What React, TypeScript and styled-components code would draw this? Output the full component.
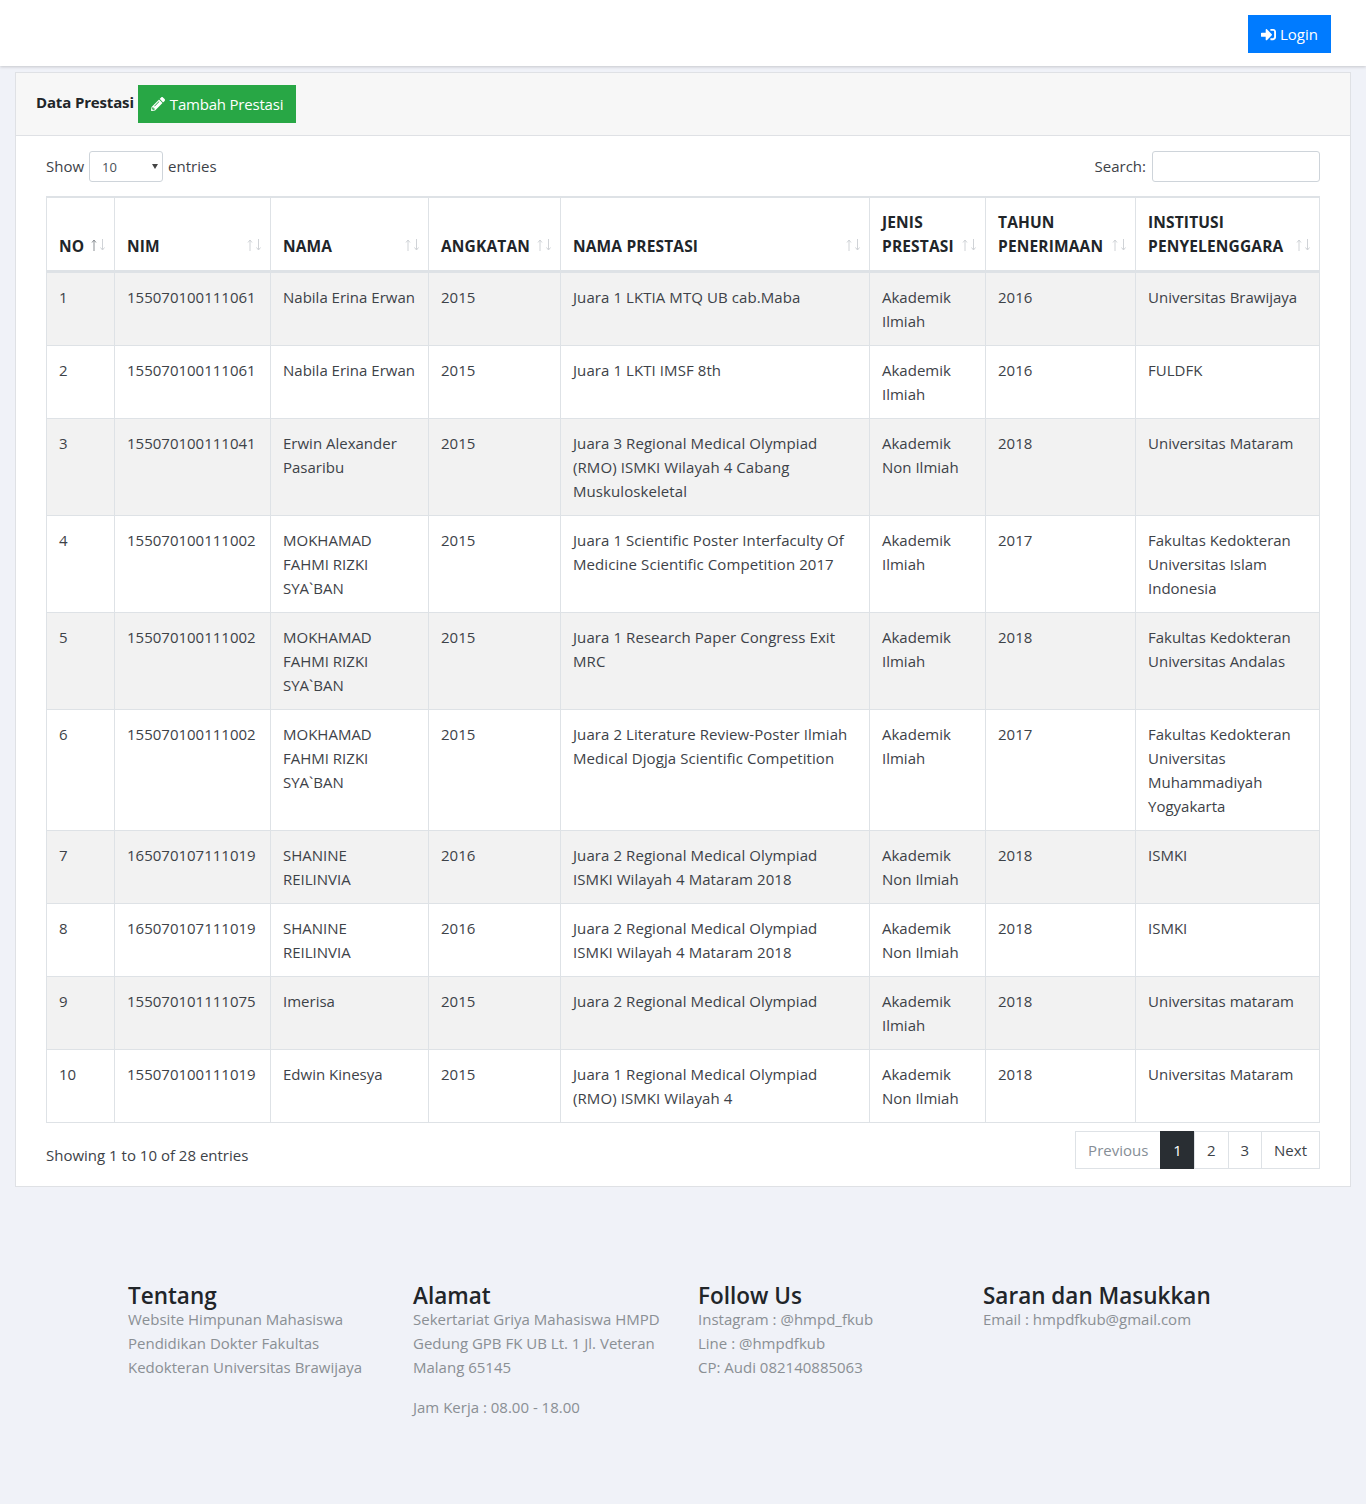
import React from "react";
import styled, { createGlobalStyle } from "styled-components";
import { FaPencilAlt, FaSignInAlt } from "react-icons/fa";

const GlobalStyle = createGlobalStyle`
  * {
    box-sizing: border-box;
  }
  body {
    margin: 0;
    background: #f0f2f8;
    color: #212529;
    font-family: "Open Sans", "Liberation Sans", sans-serif;
    font-size: 15px;
    line-height: 24px;
  }
`;

const rows = [
  ["1", "155070100111061", "Nabila Erina Erwan", "2015", "Juara 1 LKTIA MTQ UB cab.Maba", "Akademik Ilmiah", "2016", "Universitas Brawijaya"],
  ["2", "155070100111061", "Nabila Erina Erwan", "2015", "Juara 1 LKTI IMSF 8th", "Akademik Ilmiah", "2016", "FULDFK"],
  ["3", "155070100111041", "Erwin Alexander Pasaribu", "2015", "Juara 3 Regional Medical Olympiad (RMO) ISMKI Wilayah 4 Cabang Muskuloskeletal", "Akademik Non Ilmiah", "2018", "Universitas Mataram"],
  ["4", "155070100111002", "MOKHAMAD FAHMI RIZKI SYA`BAN", "2015", "Juara 1 Scientific Poster Interfaculty Of Medicine Scientific Competition 2017", "Akademik Ilmiah", "2017", "Fakultas Kedokteran Universitas Islam Indonesia"],
  ["5", "155070100111002", "MOKHAMAD FAHMI RIZKI SYA`BAN", "2015", "Juara 1 Research Paper Congress Exit MRC", "Akademik Ilmiah", "2018", "Fakultas Kedokteran Universitas Andalas"],
  ["6", "155070100111002", "MOKHAMAD FAHMI RIZKI SYA`BAN", "2015", "Juara 2 Literature Review-Poster Ilmiah Medical Djogja Scientific Competition", "Akademik Ilmiah", "2017", "Fakultas Kedokteran Universitas Muhammadiyah Yogyakarta"],
  ["7", "165070107111019", "SHANINE REILINVIA", "2016", "Juara 2 Regional Medical Olympiad ISMKI Wilayah 4 Mataram 2018", "Akademik Non Ilmiah", "2018", "ISMKI"],
  ["8", "165070107111019", "SHANINE REILINVIA", "2016", "Juara 2 Regional Medical Olympiad ISMKI Wilayah 4 Mataram 2018", "Akademik Non Ilmiah", "2018", "ISMKI"],
  ["9", "155070101111075", "Imerisa", "2015", "Juara 2 Regional Medical Olympiad", "Akademik Ilmiah", "2018", "Universitas mataram"],
  ["10", "155070100111019", "Edwin Kinesya", "2015", "Juara 1 Regional Medical Olympiad (RMO) ISMKI Wilayah 4", "Akademik Non Ilmiah", "2018", "Universitas Mataram"],
];

const columns = [
  { title: "NO", width: 68, active: true },
  { title: "NIM", width: 156 },
  { title: "NAMA", width: 158 },
  { title: "ANGKATAN", width: 132 },
  { title: "NAMA PRESTASI", width: 309 },
  { title: "JENIS PRESTASI", width: 116 },
  { title: "TAHUN PENERIMAAN", width: 150 },
  { title: "INSTITUSI PENYELENGGARA", width: 184 },
];

const footerColumns = [
  { title: "Tentang", lines: ["Website Himpunan Mahasiswa Pendidikan Dokter Fakultas Kedokteran Universitas Brawijaya"] },
  { title: "Alamat", lines: ["Sekertariat Griya Mahasiswa HMPD Gedung GPB FK UB Lt. 1 Jl. Veteran Malang 65145", "Jam Kerja : 08.00 - 18.00"] },
  { title: "Follow Us", lines: ["Instagram : @hmpd_fkub", "Line : @hmpdfkub", "CP: Audi 082140885063"], tight: true },
  { title: "Saran dan Masukkan", lines: ["Email : hmpdfkub@gmail.com"] },
];

function SortIcon({ active }: { active?: boolean }) {
  return (
    <SortArrows width="15" height="12" viewBox="0 0 15 12" fill="none" strokeWidth="1">
      <path d="M3 12V1M1 3.5 3 1l2 2.5" stroke={active ? "#8a8f94" : "#d0d3d7"} />
      <path d="M11.5 0v11M9.5 8.5l2 2.5 2-2.5" stroke="#d0d3d7" />
    </SortArrows>
  );
}

function App() {
  return (
    <>
      <GlobalStyle />
      <Navbar>
        <SolidButton $bg="#007bff">
          <FaSignInAlt size={15} />
          Login
        </SolidButton>
      </Navbar>
      <Main>
        <Card>
          <CardHeader>
            <CardTitle>Data Prestasi</CardTitle>
            <SolidButton $bg="#28a745" $tracking="-0.2px" $gap="5px">
              <FaPencilAlt size={14} />
              Tambah Prestasi
            </SolidButton>
          </CardHeader>
          <CardBody>
            <TableTools>
              <ToolLabel>
                Show
                <SelectWrap>
                  <LengthSelect defaultValue="10">
                    <option>10</option>
                    <option>25</option>
                    <option>50</option>
                    <option>100</option>
                  </LengthSelect>
                </SelectWrap>
                entries
              </ToolLabel>
              <ToolLabel>
                Search:
                <SearchInput type="search" />
              </ToolLabel>
            </TableTools>
            <Table>
              <colgroup>
                {columns.map((c) => (
                  <col key={c.title} width={c.width} />
                ))}
              </colgroup>
              <thead>
                <tr>
                  {columns.map((c) => (
                    <Th key={c.title}>
                      {c.title}
                      <SortIcon active={c.active} />
                    </Th>
                  ))}
                </tr>
              </thead>
              <tbody>
                {rows.map((row) => (
                  <Tr key={row[0]}>
                    {row.map((cell, i) => (
                      <Td key={i}>{cell}</Td>
                    ))}
                  </Tr>
                ))}
              </tbody>
            </Table>
            <TableFooter>
              <Info>Showing 1 to 10 of 28 entries</Info>
              <Pagination>
                <PageLink $disabled>Previous</PageLink>
                <PageLink $current>1</PageLink>
                <PageLink>2</PageLink>
                <PageLink>3</PageLink>
                <PageLink>Next</PageLink>
              </Pagination>
            </TableFooter>
          </CardBody>
        </Card>
      </Main>
      <Footer>
        {footerColumns.map((col) => (
          <FooterColumn key={col.title}>
            <FooterTitle>{col.title}</FooterTitle>
            {col.lines.map((line) => (
              <FooterText key={line} $tight={col.tight}>
                {line}
              </FooterText>
            ))}
          </FooterColumn>
        ))}
      </Footer>
    </>
  );
}

export default App;

const Navbar = styled.nav`
  height: 66px;
  background: #fff;
  box-shadow: 0 1px 3px rgba(0, 0, 0, 0.18);
  display: flex;
  justify-content: flex-end;
  align-items: flex-start;
  padding: 15px 35px 0 0;
`;

const SolidButton = styled.button<{ $bg: string; $tracking?: string; $gap?: string }>`
  height: 38px;
  padding: 0 13px;
  border: none;
  background: ${(p) => p.$bg};
  color: #fff;
  font: inherit;
  letter-spacing: ${(p) => p.$tracking || "normal"};
  display: inline-flex;
  align-items: center;
  gap: ${(p) => p.$gap || "4px"};
`;

const Main = styled.main`
  padding: 6px 15px 0;
`;

const Card = styled.section`
  border: 1px solid #dfe1e5;
  background: #fff;
`;

const CardHeader = styled.header`
  height: 63px;
  background: #f7f7f7;
  border-bottom: 1px solid #dfe1e5;
  display: flex;
  align-items: flex-start;
  gap: 4px;
  padding: 12px 20px 0;
`;

const CardTitle = styled.h6`
  margin: 5px 0 0;
  font-size: 15px;
  line-height: 24px;
  font-weight: 700;
  letter-spacing: -0.15px;
`;

const CardBody = styled.div`
  padding: 15px 30px 17px;
`;

const TableTools = styled.div`
  display: flex;
  justify-content: space-between;
  height: 45px;
`;

const ToolLabel = styled.label`
  display: flex;
  align-items: flex-start;
  height: 31px;
  gap: 4px;
  line-height: 30px;
  color: #3d4248;
`;

const SelectWrap = styled.span`
  position: relative;
  display: block;
  width: 74px;
  margin-left: 1px;
  margin-right: 1px;

  &::after {
    content: "";
    position: absolute;
    top: 13px;
    right: 5px;
    border-style: solid;
    border-width: 5px 3px 0;
    border-color: #444 transparent transparent;
    pointer-events: none;
  }
`;

const LengthSelect = styled.select`
  display: block;
  width: 100%;
  height: 31px;
  padding: 0 12px;
  border: 1px solid #ced4da;
  border-radius: 3px;
  background: #fff;
  color: #495057;
  font: inherit;
  font-size: 13px;
  appearance: none;
`;

const SearchInput = styled.input`
  width: 168px;
  height: 31px;
  margin-left: 2px;
  border: 1px solid #ced4da;
  border-radius: 3px;
  background: #fff;
`;

const Table = styled.table`
  width: 1273px;
  table-layout: fixed;
  border-collapse: collapse;
  border: 1px solid #dee2e6;
`;

const Th = styled.th`
  position: relative;
  padding: 12px 26px 12px 12px;
  border: 1px solid #dee2e6;
  border-top-width: 2px;
  border-bottom-width: 3px;
  text-align: left;
  vertical-align: bottom;
  font-weight: 700;
  font-size: 15.5px;
  letter-spacing: 0.15px;
  color: #212529;
`;

const SortArrows = styled.svg`
  position: absolute;
  right: 8px;
  bottom: 19px;
`;

const Tr = styled.tr`
  &:nth-child(odd) {
    background: #f2f2f2;
  }
`;

const Td = styled.td`
  padding: 12px;
  border: 1px solid #dee2e6;
  vertical-align: top;
  color: #3d4248;
  overflow-wrap: break-word;

  &:nth-child(5) {
    letter-spacing: 0.08px;
  }
`;

const TableFooter = styled.div`
  display: flex;
  justify-content: space-between;
  padding-top: 8px;
`;

const Info = styled.div`
  padding-top: 12px;
  color: #3d4248;
`;

const Pagination = styled.div`
  display: flex;
  height: 38px;
`;

const PageLink = styled.a<{ $current?: boolean; $disabled?: boolean }>`
  padding: 0 12px;
  margin-left: -1px;
  display: flex;
  align-items: center;
  border: 1px solid ${(p) => (p.$current ? "#292e33" : "#dee2e6")};
  background: ${(p) => (p.$current ? "#292e33" : "#fff")};
  color: ${(p) => (p.$current ? "#fff" : p.$disabled ? "#868e96" : "#3d4248")};
`;

const Footer = styled.footer`
  width: 1140px;
  height: 318px;
  margin: 0 auto;
  padding: 97px 15px 0;
  display: grid;
  grid-template-columns: repeat(4, 285px);
`;

const FooterColumn = styled.div`
  padding-right: 30px;
`;

const FooterTitle = styled.h4`
  margin: 0;
  font-size: 22.5px;
  line-height: 23px;
  font-weight: 600;
  color: #212529;
`;

const FooterText = styled.p<{ $tight?: boolean }>`
  margin: 0 0 ${(p) => (p.$tight ? "0" : "16px")};
  color: #8a8f94;
`;
